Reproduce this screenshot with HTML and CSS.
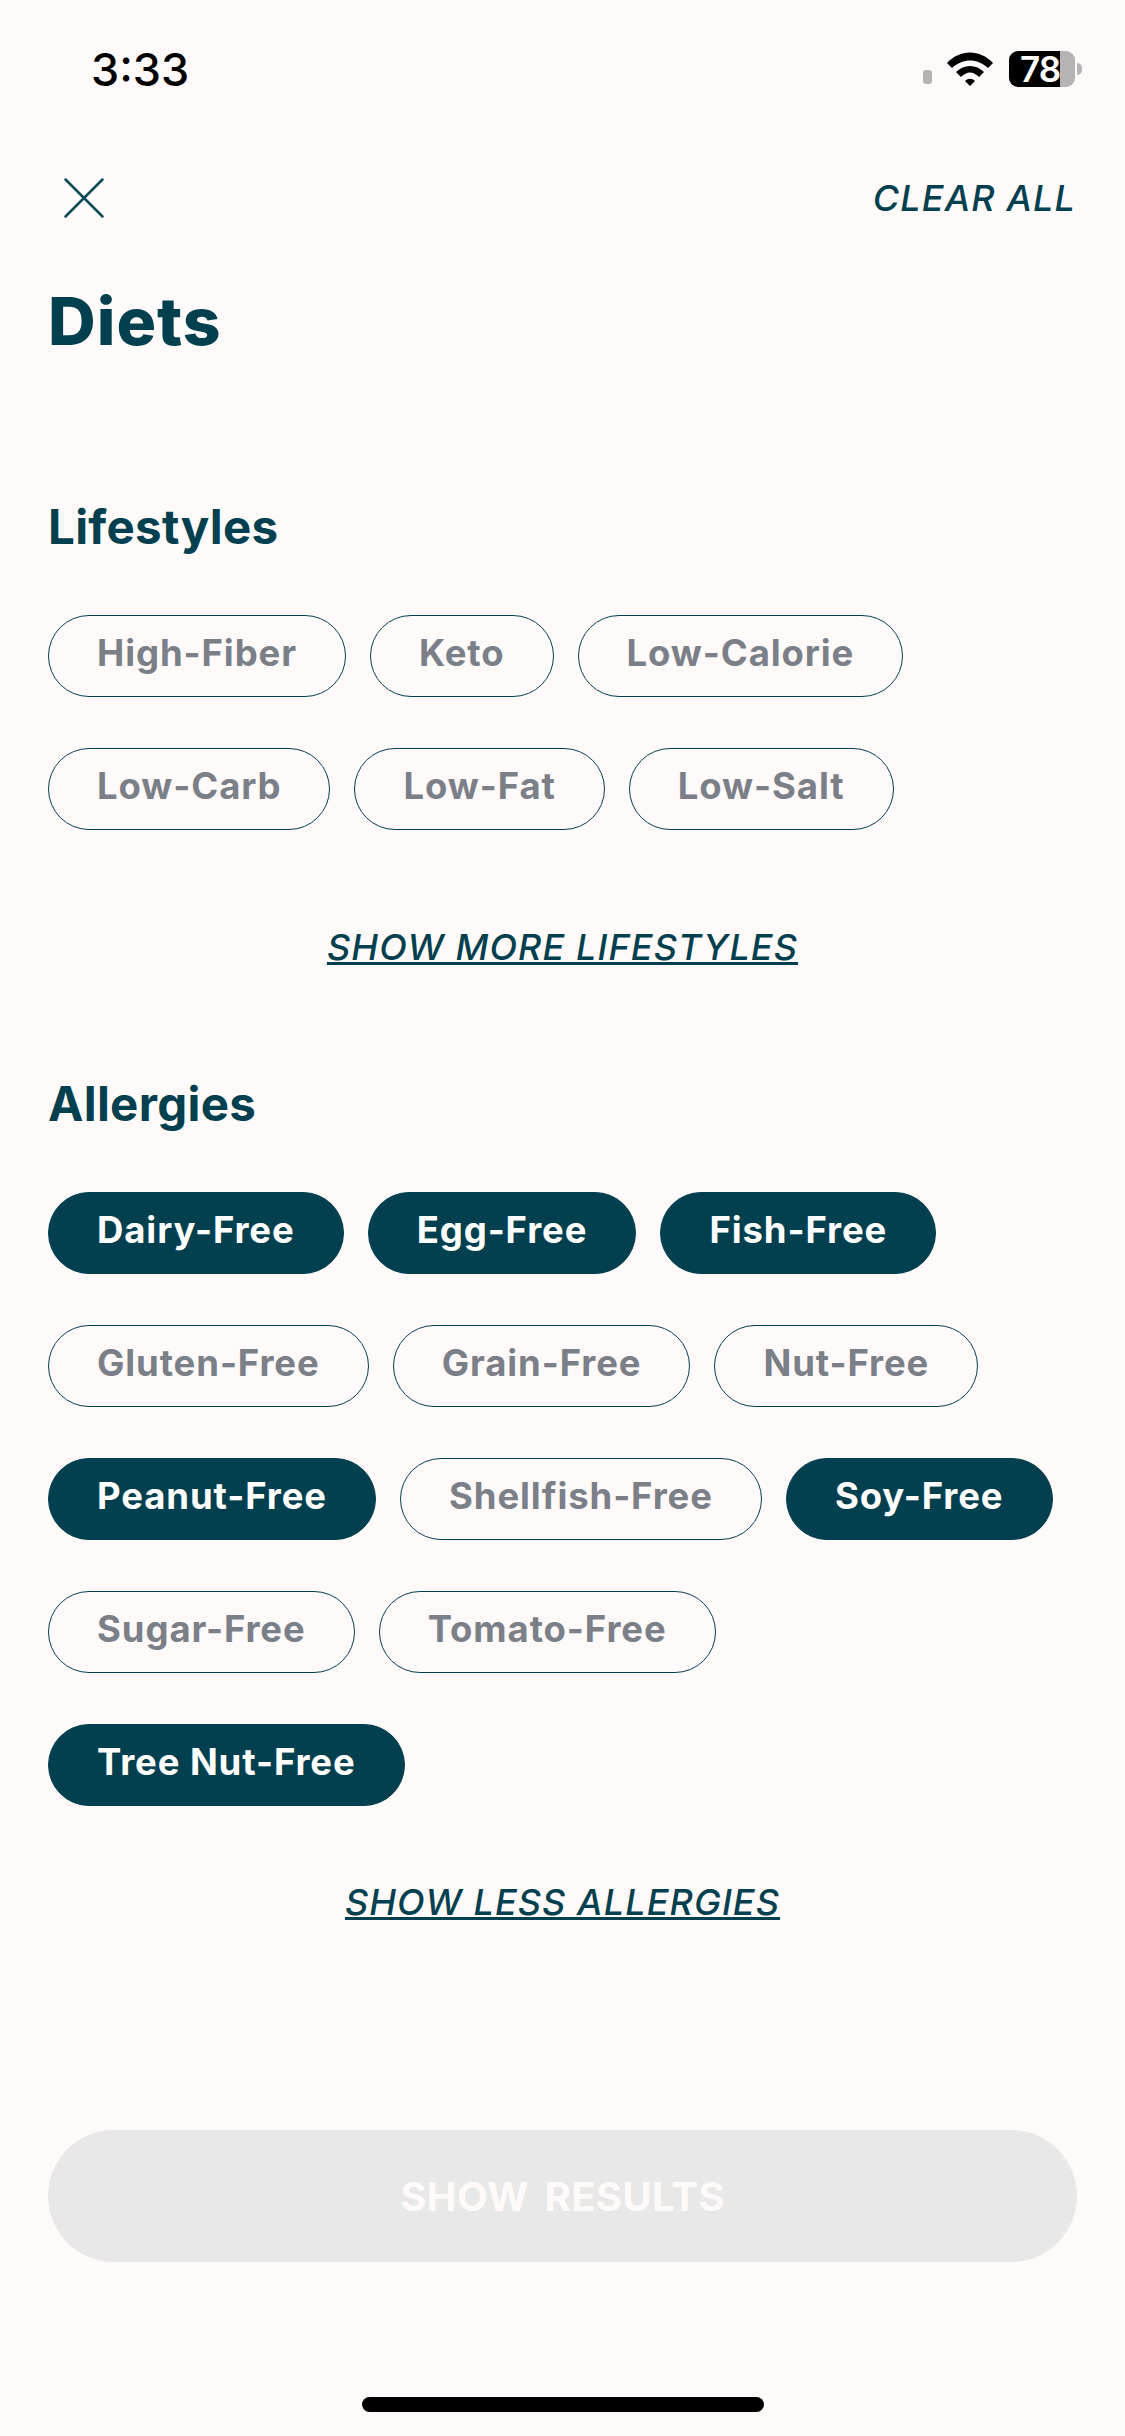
FILE: index.html
```html
<!DOCTYPE html>
<html lang="en">

<head>
  <meta charset="UTF-8">
  <meta name="viewport" content="width=device-width, initial-scale=1.0">
  <title>Diets</title>
  <link rel="stylesheet" href="styles.css">
</head>

<body>
  <div class="screen">
    <div class="status-bar">
      <span class="clock">3:33</span>
      <div class="status-icons">
        <span class="signal-dot"></span>
        <svg class="wifi" width="46" height="34" viewBox="0 0 46 34">
          <path d="M0 11 C13 -3 33 -3 46 11 L41 16 C30 6 16 6 5 16 Z" fill="#000" />
          <path d="M9 20 C17 12 29 12 37 20 L32 25 C26 19 20 19 14 25 Z" fill="#000" />
          <path d="M18 29 C21 26 25 26 28 29 L23 34 Z" fill="#000" />
        </svg>
        <div class="battery">
          <div class="battery-body"><span class="battery-level">78</span></div>
          <span class="battery-cap"></span>
        </div>
      </div>
    </div>

    <div class="top-row">
      <svg class="close-icon" width="42" height="42" viewBox="0 0 42 42">
        <path d="M2.500 2.500 L39.500 39.500 M39.500 2.500 L2.500 39.500" stroke="#0b4a59" stroke-width="2.500" stroke-linecap="round" fill="none" />
      </svg>
      <a class="clear-all">CLEAR ALL</a>
    </div>

    <h1>Diets</h1>

    <section class="lifestyles">
      <h2>Lifestyles</h2>
      <div class="chips">
        <span class="chip">High-Fiber</span>
        <span class="chip">Keto</span>
        <span class="chip">Low-Calorie</span>
        <span class="chip">Low-Carb</span>
        <span class="chip">Low-Fat</span>
        <span class="chip">Low-Salt</span>
      </div>
      <a class="toggle-link">SHOW MORE LIFESTYLES</a>
    </section>

    <section class="allergies">
      <h2>Allergies</h2>
      <div class="chips">
        <span class="chip selected">Dairy-Free</span>
        <span class="chip selected">Egg-Free</span>
        <span class="chip selected">Fish-Free</span>
        <span class="chip">Gluten-Free</span>
        <span class="chip">Grain-Free</span>
        <span class="chip">Nut-Free</span>
        <span class="chip selected">Peanut-Free</span>
        <span class="chip">Shellfish-Free</span>
        <span class="chip selected">Soy-Free</span>
        <span class="chip">Sugar-Free</span>
        <span class="chip">Tomato-Free</span>
        <span class="chip selected">Tree Nut-Free</span>
      </div>
      <a class="toggle-link">SHOW LESS ALLERGIES</a>
    </section>

    <div class="footer">
      <button class="results-btn">SHOW RESULTS</button>
      <div class="home-bar"></div>
    </div>
  </div>
</body>

</html>
```

FILE: styles.css
```css
/* Base styles */
html,
body {
  margin: 0;
  padding: 0;
}

body {
  background: #fffafa;
  color: #023f4f;
  font-family: Inter, "Liberation Sans", sans-serif;
}

.screen {
  width: 1125px;
  height: 2436px;
  display: flex;
  flex-direction: column;
  overflow: hidden;
}

/* Status bar */
.status-bar {
  height: 42px;
  padding: 48px 43px 0 91px;
  display: flex;
  justify-content: space-between;
  align-items: center;
}

.clock {
  font-size: 45px;
  font-weight: 500;
  color: #000;
}

.status-icons {
  display: flex;
  align-items: center;
}

.signal-dot {
  width: 9px;
  height: 14px;
  margin: 15px 15px 0 0;
  border-radius: 3px;
  background: #b5b3b3;
}

.wifi {
  margin-right: 16px;
}

.battery {
  display: flex;
  align-items: center;
}

.battery-body {
  width: 66px;
  height: 36px;
  border-radius: 9px;
  background: linear-gradient(90deg, #000 51px, #b5b3b3 51px);
}

.battery-level {
  display: block;
  padding-left: 11px;
  font-size: 35px;
  line-height: 36px;
  font-weight: 600;
  letter-spacing: -1px;
  color: #fff;
}

.battery-cap {
  width: 5px;
  height: 12px;
  margin-left: 2px;
  border-radius: 0 5px 5px 0;
  background: #b5b3b3;
}

/* Header */
.top-row {
  margin-top: 86px;
  padding: 0 49px 0 63px;
  display: flex;
  justify-content: space-between;
  align-items: center;
}

.clear-all,
.toggle-link {
  font-size: 36px;
  font-style: italic;
  font-weight: 500;
  letter-spacing: 1.100px;
  color: #023f4f;
}

h1 {
  margin: 61px 0 0 48px;
  font-size: 66px;
  line-height: 80px;
  font-weight: 800;
  letter-spacing: 1px;
}

h2 {
  margin: 0;
  font-size: 47.500px;
  line-height: 56px;
  font-weight: 700;
  letter-spacing: 0.300px;
}

/* Sections */
section {
  padding: 0 48px;
  display: flex;
  flex-direction: column;
}

.lifestyles {
  margin-top: 138px;
}

.allergies {
  margin-top: 107px;
}

.chips {
  margin-top: 60px;
  display: flex;
  flex-wrap: wrap;
  gap: 51px 24px;
}

.chip {
  height: 82px;
  padding: 0 48px 6px;
  box-sizing: border-box;
  display: flex;
  align-items: center;
  border: 1.500px solid #023f4f;
  border-radius: 41px;
  font-size: 36.500px;
  font-weight: 700;
  letter-spacing: 0.900px;
  color: #7b7f88;
}

.chip.selected {
  background: #023f4f;
  color: #fff;
}

.toggle-link {
  align-self: center;
  text-decoration: underline;
}

.lifestyles .toggle-link {
  margin-top: 95px;
}

.allergies .toggle-link {
  margin-top: 74px;
}

/* Footer */
.footer {
  margin-top: auto;
  padding: 0 48px 24px;
  display: flex;
  flex-direction: column;
  align-items: center;
}

.results-btn {
  width: 100%;
  height: 132px;
  border: 0;
  border-radius: 66px;
  background: #e7e8e7;
  color: #fffafa;
  font-family: Inter, "Liberation Sans", sans-serif;
  font-size: 40px;
  font-weight: 700;
  letter-spacing: 0.300px;
  word-spacing: 6px;
}

.home-bar {
  width: 402px;
  height: 15px;
  margin-top: 135px;
  border-radius: 8px;
  background: #000;
}
```
